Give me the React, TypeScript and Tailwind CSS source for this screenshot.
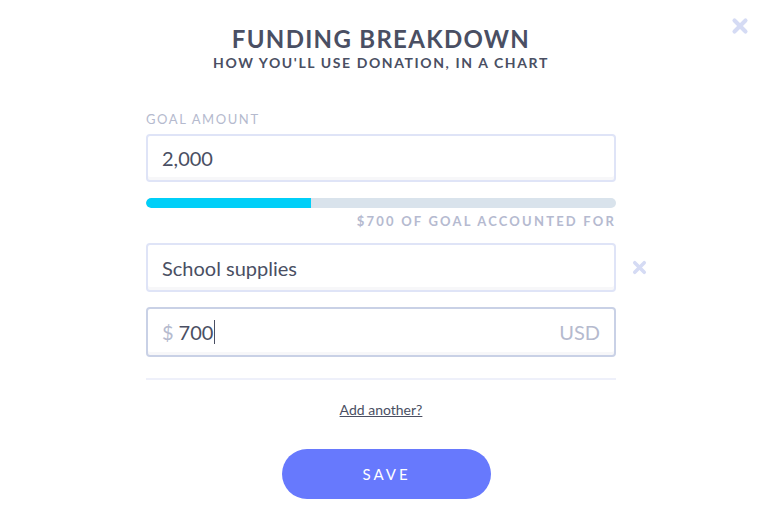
import { X } from 'lucide-react';

const font = { fontFamily: 'Lato, "Noto Sans", sans-serif' };

export default function App() {
  const goal = 2000;
  const spent = 700;
  const pct = (spent / goal) * 100;

  return (
    <main className="relative w-[760px] h-[531px] bg-white text-[#4a4f63]" style={font}>
      {/* close */}
      <button aria-label="Close" className="absolute right-[9px] top-[15px] text-[#d5dbf4]">
        <X size={22} strokeWidth={4.5} />
      </button>

      <div className="w-[470px] ml-[146px] flex flex-col">
        <div className="text-center pt-[24px]">
          <h1 className="text-[24px] leading-[29px] font-bold tracking-[1.3px]">FUNDING BREAKDOWN</h1>
          <div className="text-[14px] leading-[18px] font-bold tracking-[1.6px] mt-[1px]">
            HOW YOU'LL USE DONATION, IN A CHART
          </div>
        </div>

        <label className="mt-[39px] text-[13px] leading-[16px] tracking-[1.6px] text-[#b5bace]">GOAL AMOUNT</label>
        <div className="mt-[7px] h-[48px] rounded-[4px] border-2 border-[#dfe4f7] shadow-[inset_0_-3px_0_#f7f7f9] flex items-center px-[14px] text-[20px]">
          2,000
        </div>

        {/* progress */}
        <div className="mt-[16px] h-[10px] rounded-full bg-[#d9e3ec] overflow-hidden">
          <div className="h-full bg-[#00cff8] rounded-l-full" style={{ width: `${pct}%` }} />
        </div>
        <div className="mt-[5px] text-right text-[13px] leading-[16px] font-bold tracking-[2.2px] text-[#b5bad0]">
          $700 OF GOAL ACCOUNTED FOR
        </div>

        {/* item */}
        <div className="relative mt-[14px]">
          <div className="h-[49px] rounded-[4px] border-2 border-[#dfe4f7] shadow-[inset_0_-3px_0_#f7f7f9] flex items-center px-[14px] text-[20px]">
            School supplies
          </div>
          <button aria-label="Remove" className="absolute left-[484px] top-[15px] text-[#d5dbf4]">
            <X size={19} strokeWidth={4.5} />
          </button>
        </div>
        <div className="mt-[15px] h-[50px] rounded-[4px] border-2 border-[#c9d1e6] shadow-[inset_0_-3px_0_#f7f7f9] flex items-center px-[14px] text-[20px]">
          <span className="text-[#b5bace] mr-[5px]">$</span>
          <span>700</span>
          <span className="w-px h-[24px] bg-[#4a4f63] ml-[1px]" />
          <span className="ml-auto text-[#b5bace]">USD</span>
        </div>

        <div className="mt-[21px] h-[2px] bg-[#eef0fa]" />

        <a href="#" className="mt-[21px] self-center text-[14px] leading-[18px] underline text-[#4a4f63]">
          Add another?
        </a>

        <button className="mt-[30px] ml-[136px] w-[209px] h-[50px] rounded-full bg-[#6779fd] text-white text-[15px] tracking-[3px]">
          SAVE
        </button>
      </div>
    </main>
  );
}
